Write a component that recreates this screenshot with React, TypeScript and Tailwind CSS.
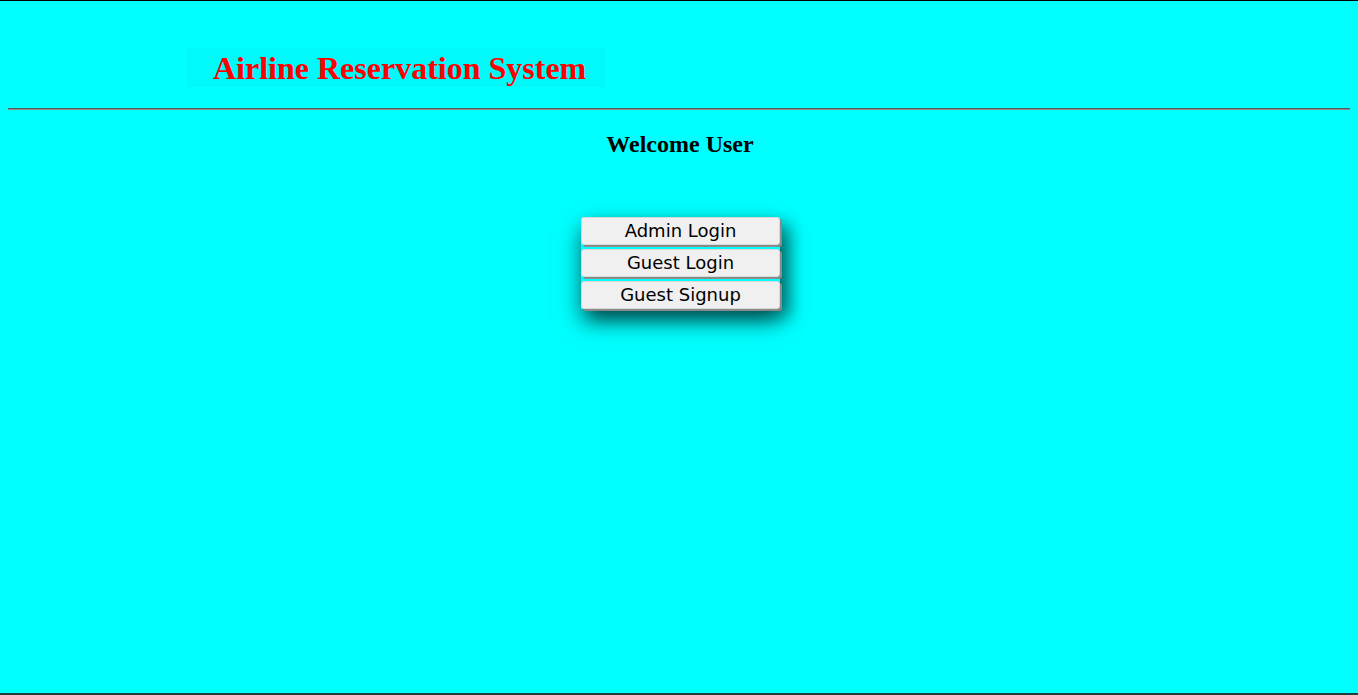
import React from "react";

export default function App() {
  return (
    <main className="min-h-[695px] h-[695px] bg-[#00ffff] border-t border-black border-b-2 border-b-[#2b3b3b] flex flex-col">
      {/* header */}
      <div className="pt-[47px] pl-[187px]">
        <div className="w-[418px] h-[39px] bg-[#00fafa] flex items-center pl-[26px]">
          <h1 className="font-['Liberation_Serif',serif] font-bold text-[32px] leading-none text-[#ff0000]">
            Airline Reservation System
          </h1>
        </div>
      </div>

      <hr className="mx-2 mt-[21px] border-t-[1px] border-b-[1px] border-t-[#5a5a5a] border-b-[#8a8a8a]" />

      <h3 className="mt-[22px] pl-[2px] text-center font-['Liberation_Serif',serif] font-bold text-[24px] leading-none text-black">
        Welcome User
      </h3>

      <div className="mt-[61px] pl-[3px] flex justify-center">
        <div className="w-[199px] flex flex-col gap-[4px] shadow-[0_12px_22px_rgba(0,0,0,0.55),10px_8px_16px_rgba(0,0,0,0.4)]">
          {["Admin Login", "Guest Login", "Guest Signup"].map((label) => (
            <button
              key={label}
              className="h-[28px] w-full bg-[#f0f0f0] border border-[#d8d8d8] rounded-[3px] shadow-[2px_2px_0_#8a8a8a] font-['DejaVu_Sans',sans-serif] text-[18px] leading-none text-black"
            >
              {label}
            </button>
          ))}
        </div>
      </div>
    </main>
  );
}
